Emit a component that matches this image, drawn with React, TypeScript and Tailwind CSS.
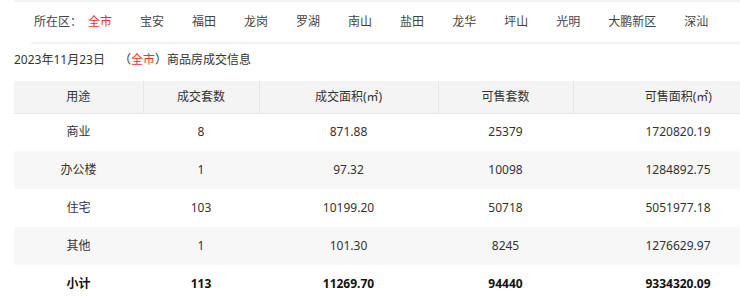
import React from 'react';

const districts = ['全市', '宝安', '福田', '龙岗', '罗湖', '南山', '盐田', '龙华', '坪山', '光明', '大鹏新区', '深汕'];

const rows = [
  { use: '商业', deals: '8', area: '871.88', sale: '25379', saleArea: '1720820.19' },
  { use: '办公楼', deals: '1', area: '97.32', sale: '10098', saleArea: '1284892.75' },
  { use: '住宅', deals: '103', area: '10199.20', sale: '50718', saleArea: '5051977.18' },
  { use: '其他', deals: '1', area: '101.30', sale: '8245', saleArea: '1276629.97' },
];

export default function App() {
  return (
    <div
      className="w-[740px] h-[305px] overflow-hidden bg-white text-[12px] text-[#333]"
      style={{ fontFamily: '"Noto Sans", "Noto Sans CJK SC", sans-serif' }}
    >
      <div className="ml-[14px] h-[2px] bg-[#f3f3f3]" />

      {/* district filter */}
      <div className="flex items-center h-[40px] pl-[34px] text-[#444]">
        <span>所在区：</span>
        <div className="flex ml-[6px] gap-[28px]">
          {districts.map((d, i) => (
            <span key={d} className={i === 0 ? 'text-[#ff2a2a]' : ''}>
              {d}
            </span>
          ))}
        </div>
      </div>
      <div className="ml-[31px] h-[2px] bg-[#f3f3f3]" />

      {/* title */}
      <div className="flex items-center h-[37px] pb-[6px] pl-[14px] text-[12px] text-[#333]">
        <span>2023年11月23日</span>
        <span className="ml-[14px]">（<span className="text-[#ff2a2a]">全市</span>）商品房成交信息</span>
      </div>

      <table className="ml-[14px] w-[769px] table-fixed border-collapse">
        <colgroup>
          <col className="w-[129px]" />
          <col className="w-[116px]" />
          <col className="w-[179px]" />
          <col className="w-[135px]" />
          <col className="w-[210px]" />
        </colgroup>
        <thead>
          <tr className="h-[32px] bg-[#f4f4f4] border-b border-[#e6e6e6]">
            <th className="font-normal border-r border-[#e6e6e6]">用途</th>
            <th className="font-normal border-r border-[#e6e6e6]">成交套数</th>
            <th className="font-normal border-r border-[#e6e6e6]">成交面积(㎡)</th>
            <th className="font-normal border-r border-[#e6e6e6]">可售套数</th>
            <th className="font-normal">可售面积(㎡)</th>
          </tr>
        </thead>
        <tbody>
          {rows.map((r, i) => (
            <tr key={r.use} className={`h-[38px] text-center ${i % 2 === 1 ? 'bg-[#f7f7f7]' : ''}`}>
              <td>{r.use}</td>
              <td>{r.deals}</td>
              <td>{r.area}</td>
              <td>{r.sale}</td>
              <td>{r.saleArea}</td>
            </tr>
          ))}
          <tr className="h-[38px] text-center font-bold text-[#111]">
            <td>小计</td>
            <td>113</td>
            <td>11269.70</td>
            <td>94440</td>
            <td>9334320.09</td>
          </tr>
        </tbody>
      </table>
    </div>
  );
}
